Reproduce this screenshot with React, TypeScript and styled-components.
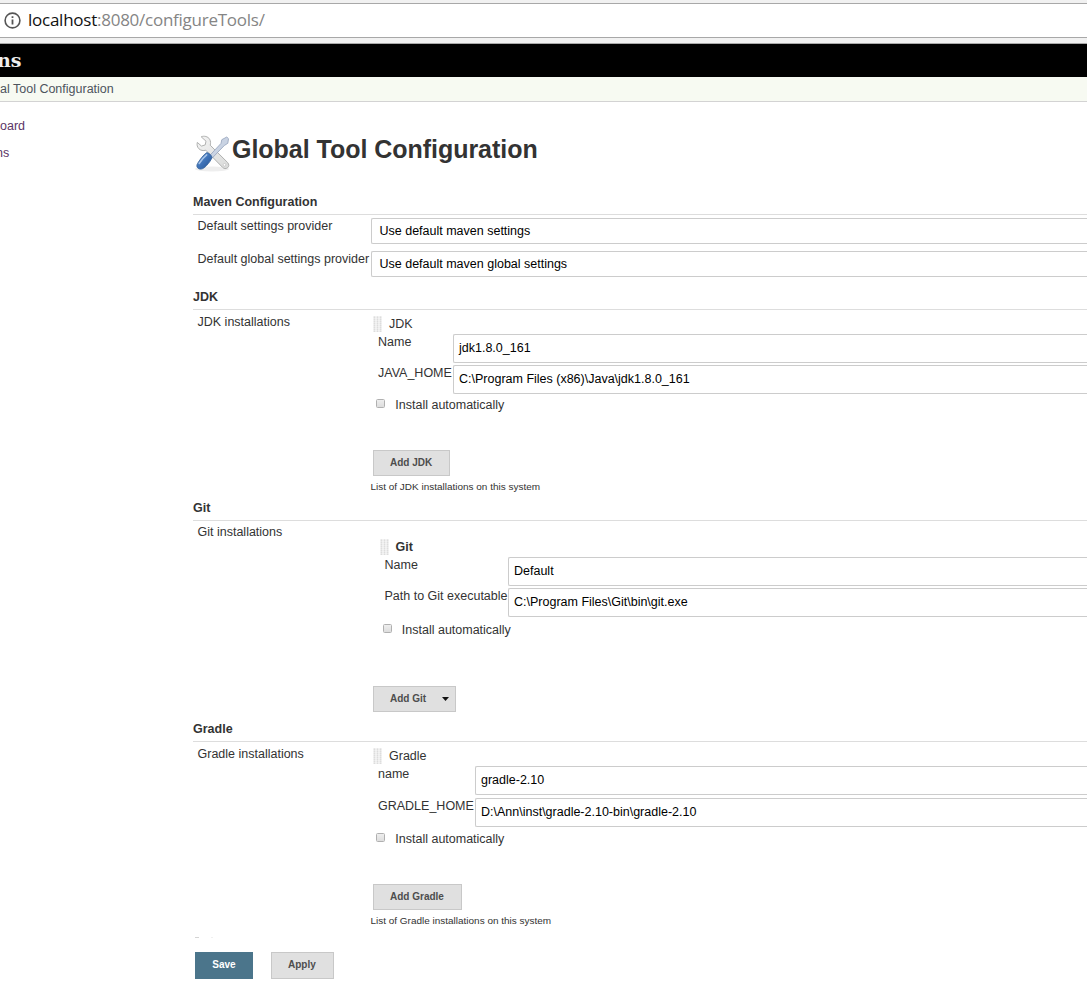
import React from "react";
import styled, { createGlobalStyle } from "styled-components";

const Global = createGlobalStyle`
  * { box-sizing: border-box; }
  html, body { margin: 0; background: #fff; overflow: hidden; }
  body { font: 13px/16px "Liberation Sans", Arial, sans-serif; color: #333; white-space: nowrap; }
`;

const Page = styled.div`
  width: 1087px;
  height: 987px;
  overflow: hidden;
`;

const AddressFrame = styled.div`
  height: 44px;
  padding: 3px 0 5px;
  background: #f1f1f1;
  border-bottom: 1px solid #aaa;
`;

const AddressBar = styled.div`
  display: flex;
  align-items: center;
  height: 35px;
  padding-left: 4px;
  background: #fff;
  border-top: 1px solid #a8a8a8;
  border-bottom: 1px solid #a8a8a8;
`;

const Url = styled.span`
  margin: -1px 0 0 7px;
  font: 400 17px/24px "Open Sans", "Noto Sans", sans-serif;
  letter-spacing: -0.25px;
  color: #858585;
`;

const Host = styled.span`
  color: #111;
`;

const Banner = styled.div`
  height: 33px;
  background: #000;
  color: #eee;
  display: flex;
  align-items: center;
  font: bold 19px/33px "DejaVu Serif", serif;
`;

const BannerText = styled.span`
  margin-left: -3px;
`;

const Breadcrumbs = styled.div`
  height: 25px;
  line-height: 24px;
  background: #f7faf2;
  border-bottom: 1px solid #d3d3d3;
  color: #4d545d;
  font-size: 12.5px;
`;

const Columns = styled.div`
  display: flex;
`;

const SidePanel = styled.nav`
  display: flex;
  flex-direction: column;
  gap: 11px;
  width: 193px;
  padding-top: 16px;
  color: #5c3566;
  font-size: 12.5px;
`;

const SideLink = styled.span<{ $shift?: number }>`
  margin-left: ${(p) => -(p.$shift ?? 0)}px;
`;

const Main = styled.main`
  flex: 1;
  min-width: 0;
`;

const TitleRow = styled.header`
  display: flex;
  height: 91px;
  padding-top: 31px;
`;

const Title = styled.h1`
  margin: 0;
  font-size: 25px;
  line-height: 32px;
  letter-spacing: -0.03px;
  color: #333;
`;

const Heading = styled.h2`
  margin: 0;
  height: 22px;
  font-size: 12.5px;
  line-height: 18px;
  border-bottom: 1px solid #ddd;
`;

const Body = styled.div<{ $h: number }>`
  display: flex;
  height: ${(p) => p.$h}px;
`;

const SettingList = styled.div<{ $h: number }>`
  height: ${(p) => p.$h}px;
  padding-top: 3px;
`;

const Setting = styled.div`
  display: flex;
  height: 33px;
`;

const Label = styled.div<{ $top?: number }>`
  width: 178px;
  padding-left: 4.5px;
  padding-top: ${(p) => p.$top ?? 0}px;
  font-size: 12.5px;
`;

const SelectBox = styled.div`
  flex: 1;
  height: 26px;
  padding-left: 7.5px;
  line-height: 24px;
  font-size: 12.5px;
  color: #000;
  border: 1px solid #ccc;
  border-right: 0;
  border-radius: 2px 0 0 2px;
`;

const Tools = styled.div`
  flex: 1;
  min-width: 0;
`;

const Tool = styled.div<{ $inset: number; $top: number; $h: number }>`
  height: ${(p) => p.$h}px;
  padding-top: ${(p) => p.$top}px;
  padding-left: ${(p) => p.$inset}px;
`;

const ToolHead = styled.div<{ $bold?: boolean }>`
  display: flex;
  gap: 7px;
  height: 18px;
  font-size: 12.5px;
  font-weight: ${(p) => (p.$bold ? 700 : 400)};
`;

const Field = styled.label<{ $h: number }>`
  display: flex;
  height: ${(p) => p.$h}px;
`;

const FieldName = styled.span<{ $w: number }>`
  width: ${(p) => p.$w}px;
  padding-left: 5px;
  font-size: 12.5px;
`;

const Input = styled.div`
  flex: 1;
  height: 29px;
  padding-left: 5px;
  line-height: 27px;
  font-size: 12.5px;
  color: #000;
  border: 1px solid #ccc;
  border-right: 0;
  border-radius: 2px 0 0 2px;
`;

const CheckRow = styled.div<{ $top: number }>`
  display: flex;
  gap: 10.3px;
  padding: ${(p) => p.$top}px 0 0 3px;
  font-size: 12.5px;
`;

const Checkbox = styled.span`
  width: 9px;
  height: 9px;
  margin-top: 2px;
  border: 1px solid #b0b0b0;
  border-radius: 1.5px;
  background: linear-gradient(#eee, #ddd);
`;

const Button = styled.button<{ $w: number; $primary?: boolean; $h?: number }>`
  display: flex;
  align-items: center;
  justify-content: ${(p) => (p.$primary ? "center" : "flex-start")};
  width: ${(p) => p.$w}px;
  height: ${(p) => p.$h ?? 26}px;
  padding: 0 ${(p) => (p.$primary ? 0 : 16)}px ${(p) => (p.$h ? 2 : 0)}px;
  font: bold 10px/14px "Liberation Sans", Arial, sans-serif;
  color: ${(p) => (p.$primary ? "#fff" : "#4d4d4d")};
  background: ${(p) => (p.$primary ? "#4b758b" : "#e0e0e0")};
  border: 1px solid ${(p) => (p.$primary ? "#4b758b" : "#c8c8c8")};
`;

const AddButton = styled(Button)`
  margin-left: 2px;
`;

const Help = styled.div`
  margin: 3px 0 0 -0.5px;
  font-size: 9.97px;
`;

const Caret = styled.svg`
  margin-left: 16px;
  flex: none;
`;

const HiddenHeading = styled.div`
  display: flex;
  gap: 12px;
  height: 7px;
  padding: 0 0 0 2px;

  &::before,
  &::after {
    content: "";
    width: 4px;
    height: 1px;
    background: #d4d4d4;
  }

  &::after {
    width: 2px;
    background: #f0f0f0;
  }
`;

const Actions = styled.footer`
  display: flex;
  gap: 18px;
  padding: 8px 0 0 2px;
`;

const InfoIcon = () => (
  <svg width="17" height="17" viewBox="0 0 17 17">
    <circle cx="8.5" cy="8.5" r="7.4" fill="none" stroke="#555" strokeWidth="1.6" />
    <path d="M8.5 7.4v5M8.5 4.3v1.8" stroke="#555" strokeWidth="1.8" />
  </svg>
);

const ToolsIcon = () => (
  <svg width="39" height="41" viewBox="0 0 39 41">
    <defs>
      <linearGradient id="steel" x1="0" y1="0" x2="1" y2="1">
        <stop offset="0" stopColor="#f4f4f4" />
        <stop offset="1" stopColor="#d9dad9" />
      </linearGradient>
      <linearGradient id="grip" x1="0" y1="0" x2="1" y2="1">
        <stop offset="0" stopColor="#6c9bd2" />
        <stop offset=".5" stopColor="#3f73b8" />
        <stop offset="1" stopColor="#24508e" />
      </linearGradient>
    </defs>
    <ellipse cx="19" cy="36" rx="17" ry="2.4" fill="#eee" />
    <path
      d="M8.200 3.800C11 2.600 15 3.400 16.600 6.200c1.200 2.100 1.100 4.200.6 6L34.600 29.500c1.700 2 1.500 4-.1 5.300-1.700 1.300-3.500 1-5-.5L12.800 17.200c-2.500.8-5.200.3-7-1.500C4.300 14.100 3.700 12 4.300 9.400l4.200 3.700 3.700-1.200.8-3.700z"
      fill="url(#steel)"
      stroke="#b0b1b0"
      strokeWidth="1"
      strokeLinejoin="round"
    />
    <circle cx="31.500" cy="31.800" r="1.300" fill="#fff" stroke="#bbb" strokeWidth=".6" />
    <path
      d="M33.800 4l1.700 1.700-.7 4.600-3.500 2.200L18.700 25.600l-2.500-2.500L28 10.400l.8-3.700z"
      fill="#c9d3e3"
      stroke="#9ba8bf"
      strokeWidth=".9"
      strokeLinejoin="round"
    />
    <path
      d="M13.800 19.600c1.900.4 4.600 2.300 5.200 4.700-.8 2.700-2.600 5.200-5.400 8.200-2.300 2.700-5.100 4.300-7.600 3.300-2.600-1.200-2.700-3.600-1-6.100 2.100-3.200 5.300-7.900 8.800-10.100z"
      fill="url(#grip)"
      stroke="#376399"
      strokeWidth=".8"
    />
    <path d="M6.200 30.500c2-3 4.500-6.300 7.500-8.600" stroke="#a7c4e8" strokeWidth="1.500" fill="none" strokeLinecap="round" />
  </svg>
);

const DragHandle = () => (
  <svg width="9" height="17" viewBox="0 0 9 17">
    {[0, 3, 6].map((x) =>
      [0, 2, 4, 6, 8, 10, 12, 14].map((y) => (
        <rect key={`${x}-${y}`} x={x + 0.5} y={y + 0.5} width="2" height="1.200" fill="#cfcfcf" />
      ))
    )}
  </svg>
);

type Installer = {
  title: string;
  height: number;
  top: number;
  inset: number;
  toolHeight: number;
  bold?: boolean;
  labelTop: number;
  nameWidth: number;
  rowHeight: number;
  checkTop: number;
  fields: [string, string][];
  buttonWidth: number;
  menu?: boolean;
  help?: string;
};

const installers: Installer[] = [
  {
    title: "JDK", height: 189, top: 6, inset: 2, toolHeight: 140, labelTop: 4, nameWidth: 80, rowHeight: 31, checkTop: 1,
    fields: [["Name", "jdk1.8.0_161"], ["JAVA_HOME", "C:\\Program Files (x86)\\Java\\jdk1.8.0_161"]],
    buttonWidth: 77, help: "List of JDK installations on this system",
  },
  {
    title: "Git", height: 199, top: 18, inset: 8.500, toolHeight: 165, bold: true, labelTop: 3, nameWidth: 128.500, rowHeight: 31, checkTop: 3,
    fields: [["Name", "Default"], ["Path to Git executable", "C:\\Program Files\\Git\\bin\\git.exe"]],
    buttonWidth: 83, menu: true,
  },
  {
    title: "Gradle", height: 195, top: 6, inset: 2, toolHeight: 142, labelTop: 4, nameWidth: 102, rowHeight: 32, checkTop: 1,
    fields: [["name", "gradle-2.10"], ["GRADLE_HOME", "D:\\Ann\\inst\\gradle-2.10-bin\\gradle-2.10"]],
    buttonWidth: 89, help: "List of Gradle installations on this system",
  },
];

const InstallerSection = (t: Installer) => (
  <section>
    <Heading>{t.title}</Heading>
    <Body $h={t.height}>
      <Label $top={t.labelTop}>{t.title} installations</Label>
      <Tools>
        <Tool $inset={t.inset} $top={t.top} $h={t.toolHeight}>
          <ToolHead $bold={t.bold}>
            <DragHandle />
            <span>{t.title}</span>
          </ToolHead>
          {t.fields.map(([name, value]) => (
            <Field key={name} $h={t.rowHeight}>
              <FieldName $w={t.nameWidth}>{name}</FieldName>
              <Input>{value}</Input>
            </Field>
          ))}
          <CheckRow $top={t.checkTop}>
            <Checkbox />
            <span>Install automatically</span>
          </CheckRow>
        </Tool>
        <AddButton $w={t.buttonWidth}>
          Add {t.title}
          {t.menu && (
            <Caret width="7" height="4" viewBox="0 0 7 4">
              <path d="M0 0h7L3.500 4z" fill="#111" />
            </Caret>
          )}
        </AddButton>
        {t.help && <Help>{t.help}</Help>}
      </Tools>
    </Body>
  </section>
);

export default function App() {
  return (
    <Page>
      <Global />
      <AddressFrame>
        <AddressBar>
          <InfoIcon />
          <Url>
            <Host>localhost</Host>:8080/configureTools/
          </Url>
        </AddressBar>
      </AddressFrame>
      <Banner>
        <BannerText>ns</BannerText>
      </Banner>
      <Breadcrumbs>al Tool Configuration</Breadcrumbs>
      <Columns>
        <SidePanel>
          <SideLink>oard</SideLink>
          <SideLink $shift={4}>ns</SideLink>
        </SidePanel>
        <Main>
          <TitleRow>
            <ToolsIcon />
            <Title>Global Tool Configuration</Title>
          </TitleRow>
          <section>
            <Heading>Maven Configuration</Heading>
            <SettingList $h={73}>
              <Setting>
                <Label>Default settings provider</Label>
                <SelectBox>Use default maven settings</SelectBox>
              </Setting>
              <Setting>
                <Label>Default global settings provider</Label>
                <SelectBox>Use default maven global settings</SelectBox>
              </Setting>
            </SettingList>
          </section>
          {installers.map((t) => (
            <InstallerSection key={t.title} {...t} />
          ))}
          <HiddenHeading />
          <Actions>
            <Button $w={58} $h={27} $primary>Save</Button>
            <Button $w={63} $h={27}>Apply</Button>
          </Actions>
        </Main>
      </Columns>
    </Page>
  );
}
